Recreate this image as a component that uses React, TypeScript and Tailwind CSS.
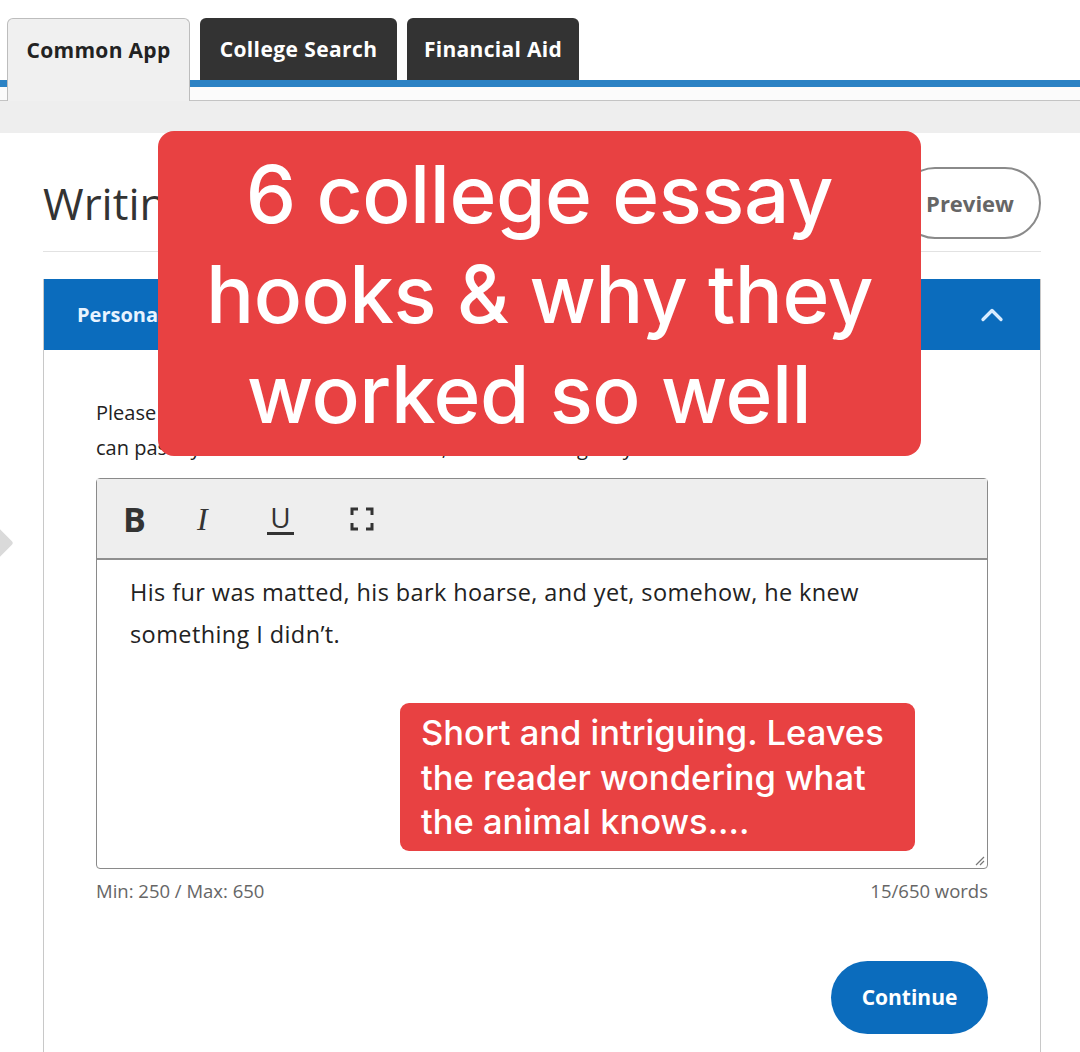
import { ChevronUp } from "lucide-react";

const ui = { fontFamily: '"Open Sans", "Noto Sans", sans-serif' };
const caption = { fontFamily: 'Inter, "Liberation Sans", sans-serif' };

export default function App() {
  return (
    <div className="relative min-h-[1052px] bg-white overflow-hidden" style={ui}>
      {/* Top tabs */}
      <div className="flex flex-col">
        <div className="flex items-start gap-[10px] pl-[7px] pt-[18px] h-[80px]">
          <div className="relative z-10 h-[83px] w-[183px] rounded-t-[6px] border border-b-0 border-[#bdbdbd] bg-[#f0f0f0] pt-[16px] text-center text-[21px] font-bold tracking-[0.3px] text-[#222]">
            Common App
          </div>
          <div className="h-[62px] w-[197px] rounded-t-[6px] bg-[#333333] pt-[16px] text-center text-[21px] font-bold tracking-[0.4px] text-white">
            College Search
          </div>
          <div className="h-[62px] w-[172px] rounded-t-[6px] bg-[#333333] pt-[16px] text-center text-[21px] font-bold tracking-[0.3px] text-white">
            Financial Aid
          </div>
        </div>
        <div className="h-[7px] bg-[#2b82c4]" />
        <div className="h-[13px] bg-[#fbfbfb]" />
        <div className="h-[33px] border-t border-[#c4c4c4] bg-[#eeeeee]" />
      </div>

      {/* Carousel arrow peeking in from the left */}
      <div className="absolute left-[-20px] top-[529px] h-[28px] w-[28px] rotate-45 rounded-[3px] bg-[#dadada]" />

      <div className="ml-[43px] w-[998px]">
        {/* Title row */}
        <div className="flex items-center justify-between border-b border-[#e2e2e2] pt-[34px] pb-[12px]">
          <h1 className="text-[44px] font-normal leading-none text-[#333]">Writing</h1>
          <button className="h-[72px] w-[142px] rounded-full border-2 border-[#8a8a8a] text-[22px] font-bold text-[#666]">
            Preview
          </button>
        </div>

        {/* Essay card */}
        <div className="mt-[27px] border-x border-[#c8c8c8]">
          <div className="flex h-[71px] items-center justify-between bg-[#0b6cbd] pl-[33px] pr-[30px]">
            <span className="text-[20px] font-bold text-[#e8f3ff]">Personal Essay</span>
            <ChevronUp className="h-[36px] w-[36px] text-[#d8ecff]" strokeWidth={2.2} />
          </div>

          <div className="px-[52px] pt-[45px] pb-[40px]">
            <p className="text-[20px] leading-[35px] text-[#222]">
              Please write an essay on the topic you have chosen below. Note that you
              <br />
              can paste your text from a document, but formatting may be lost.
            </p>

            <div className="mt-[13px] flex h-[391px] flex-col rounded-[4px] border border-[#8a8a8a]">
              <div className="flex h-[81px] items-center border-b-2 border-[#8f8f8f] bg-[#eeeeee] px-[26px]">
                <span className="w-[26px] text-[34px] font-bold leading-none text-[#333]">B</span>
                <span
                  className="ml-[48px] w-[24px] text-[32px] italic leading-none text-[#333]"
                  style={{ fontFamily: '"Liberation Serif", serif' }}
                >
                  I
                </span>
                <span className="ml-[46px] w-[27px] border-b-[3px] border-[#333] pb-[1px] text-center text-[28px] leading-none text-[#333]">
                  U
                </span>
                <svg className="ml-[56px]" width="24" height="24" viewBox="0 0 24 24" fill="none" stroke="#333" strokeWidth="3">
                  <path d="M2 8V2h6M16 2h6v6M22 16v6h-6M8 22H2v-6" />
                </svg>
              </div>
              <div className="relative flex-1 px-[33px] pt-[11px] text-[23.5px] leading-[42px] tracking-[0.4px] text-[#222]">
                His fur was matted, his bark hoarse, and yet, somehow, he knew
                <br />
                something I didn’t.
                <svg className="absolute bottom-[2px] right-[2px]" width="12" height="12" viewBox="0 0 12 12" stroke="#777" strokeWidth="1.2">
                  <path d="M11 3L3 11M11 7L7 11" />
                </svg>
              </div>
            </div>

            <div className="mt-[8px] flex justify-between text-[18.5px] text-[#666]">
              <span>Min: 250 / Max: 650</span>
              <span>15/650 words</span>
            </div>

            <div className="mt-[56px] flex justify-end">
              <button className="h-[73px] w-[157px] rounded-full bg-[#0b6cbd] text-[21px] font-bold text-white">
                Continue
              </button>
            </div>
          </div>
        </div>
      </div>

      {/* Title card */}
      <div
        className="absolute left-[158px] top-[131px] flex h-[325px] w-[763px] flex-col items-center justify-center rounded-[16px] bg-[#e84142] text-[80px] font-medium leading-[100px] tracking-[-0.5px] text-white"
        style={caption}
      >
        <div>6 college essay</div>
        <div>hooks &amp; why they</div>
        <div className="whitespace-pre">worked so well </div>
      </div>

      {/* Note card */}
      <div
        className="absolute left-[400px] top-[703px] h-[148px] w-[515px] rounded-[9px] bg-[#e84142] px-[21px] pt-[8px] text-[34.5px] font-medium leading-[44.5px] text-white"
        style={caption}
      >
        Short and intriguing. Leaves
        <br />
        the reader wondering what
        <br />
        the animal knows....
      </div>
    </div>
  );
}
